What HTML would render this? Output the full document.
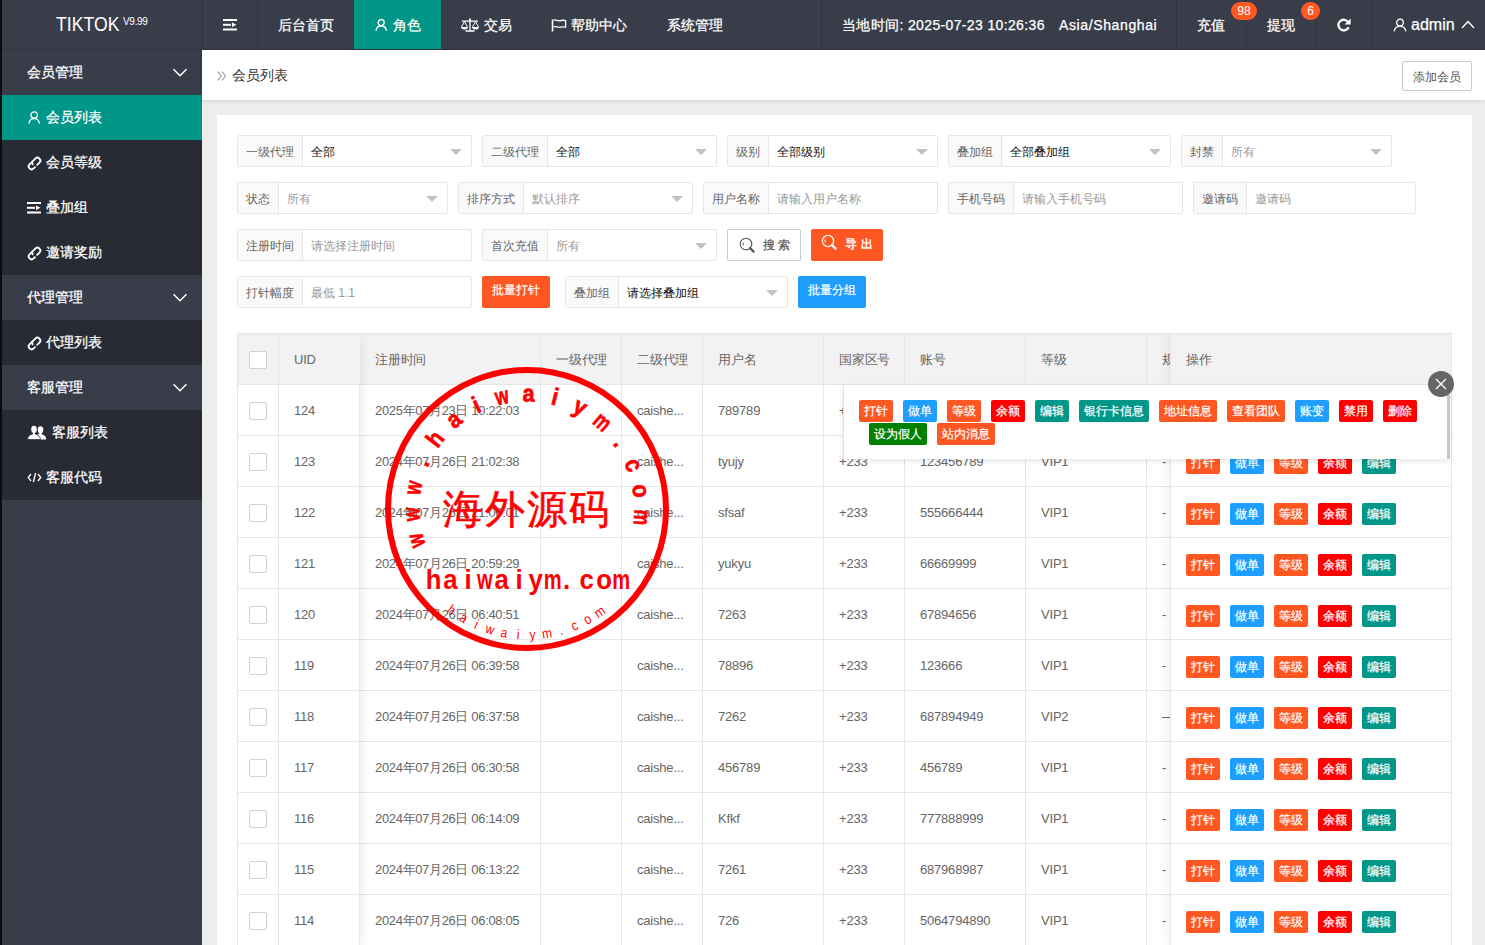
<!DOCTYPE html>
<html><head><meta charset="utf-8">
<style>
*{box-sizing:border-box;margin:0;padding:0}
html,body{width:1485px;height:945px;overflow:hidden}
body{position:relative;background:#ededed;font-family:"Liberation Sans",sans-serif;color:#666}
.a{position:absolute}
#hdr{left:0;top:0;width:1485px;height:50px;background:#393d49;border-bottom:1px solid #30333d}
.sep{position:absolute;top:0;width:1px;height:49px;background:#30333d}
.nv{position:absolute;top:0;height:49px;line-height:50px;color:#fff;font-size:14px;white-space:nowrap;-webkit-text-stroke:0.25px #fff}
#side{left:0;top:50px;width:202px;height:895px;background:#393d49}
#side .strip{position:absolute;left:0;top:0;width:2px;height:895px;background:#0b0c0e}
.si{position:absolute;left:2px;width:200px;height:45px;line-height:45px;color:#fff;font-size:14px;white-space:nowrap;-webkit-text-stroke:0.25px #fff}
.si.p{background:#393d49}
.si.c{background:#282b33}
.si.on{background:#009688}
#crumb{left:202px;top:50px;width:1283px;height:50px;background:#fff;box-shadow:0 1px 4px rgba(0,0,0,.12)}
#card{left:217px;top:115px;width:1255px;height:830px;background:#fff}

.fld{position:absolute;height:32px;border:1px solid #e6e6e6;border-radius:2px;background:#fff;font-size:12px;line-height:32px;white-space:nowrap}
.lab{position:absolute;left:0;top:0;height:30px;background:#fafafa;border-right:1px solid #e6e6e6;color:#666;text-align:center}
.val{position:absolute;top:0}
.tri{position:absolute;right:9px;top:13px;width:0;height:0;border-left:6px solid transparent;border-right:6px solid transparent;border-top:6px solid #c2c2c2}
.btn{position:absolute;height:32px;border-radius:2px;font-size:12px;line-height:32px;white-space:nowrap;-webkit-text-stroke:0.2px currentColor}
.wb{border:1px solid #c9c9c9;background:#fff;color:#555;line-height:30px}
#tbl{left:237px;top:333px;width:1215px;height:612px;border:1px solid #e6e6e6;border-bottom:0;overflow:hidden;background:#fff}
#tbl .vl{position:absolute;top:0;width:1px;height:612px;background:#e6e6e6}
#tbl .hl{position:absolute;left:0;width:1215px;height:1px;background:#e6e6e6}
.tc{position:absolute;height:51px;line-height:51px;font-size:13px;color:#666;white-space:nowrap;letter-spacing:-0.2px}
#fl{left:0;top:0;width:122px;height:612px;background:#fff;border-right:1px solid #e6e6e6;box-shadow:3px 0 8px rgba(0,0,0,.06)}
#fl .vl{height:612px}
.cb{position:absolute;left:11px;width:18px;height:18px;border:1px solid #d2d2d2;border-radius:2px;background:#fff}
#fr{left:932px;top:0;width:282px;height:612px;background:#fff;border-left:1px solid #e6e6e6;box-shadow:-3px 0 8px rgba(0,0,0,.06)}
.ob{position:absolute;height:22px;line-height:22px;padding:0 5px;border-radius:2px;color:#fff;font-size:12px;white-space:nowrap;-webkit-text-stroke:0.2px #fff}
#pop{left:843px;top:385px;width:607px;height:74px;background:#fff;border-left:1px solid #e2e2e2;box-shadow:0 2px 6px rgba(0,0,0,.1)}
</style></head><body>

<div id="hdr" class="a">
  <div class="nv" style="left:56px;top:-1px;font-size:19.5px;transform:scaleX(0.905);transform-origin:0 0;-webkit-text-stroke:0">TIKTOK</div>
  <div class="nv" style="left:123px;top:-3px;font-size:10px;letter-spacing:-0.3px;-webkit-text-stroke:0">V9.99</div>
  <div class="sep" style="left:202px"></div>
  <svg class="a" style="left:223px;top:19px" width="15" height="12" viewBox="0 0 15 12"><rect x="0" y="0" width="14" height="2" fill="#fff"/><rect x="0" y="4.8" width="8" height="2" fill="#fff"/><path d="M9 3.5 L13.5 5.8 L9 8.1Z" fill="#fff"/><rect x="0" y="9.5" width="14" height="2" fill="#fff"/></svg>
  <div class="sep" style="left:257px"></div>
  <div class="nv" style="left:278px">后台首页</div>
  <div class="a" style="left:354px;top:0;width:87px;height:49px;background:#009688"></div>
  <svg class="a" style="left:375px;top:19px" width="13" height="12" viewBox="0 0 13 12"><circle cx="6.2" cy="3.6" r="3" fill="none" stroke="#fff" stroke-width="1.3"/><path d="M1 11.8 C1.3 8.6 3.3 7 6.2 7 C9.1 7 11.1 8.6 11.4 11.8" fill="none" stroke="#fff" stroke-width="1.3"/></svg>
  <div class="nv" style="left:393px">角色</div>
  <svg class="a" style="left:460px;top:18px" width="20" height="14" viewBox="0 0 20 14"><path d="M2 3.2 H18 M10 1 V13 M5.5 13 H14.5" stroke="#fff" stroke-width="1.3" fill="none"/><circle cx="10" cy="1.6" r="1.1" fill="#fff"/><path d="M4.5 3.5 L1.5 9 M4.5 3.5 L7.5 9 M15.5 3.5 L12.5 9 M15.5 3.5 L18.5 9" stroke="#fff" stroke-width="1" fill="none"/><path d="M1 9 H8 C7.6 10.8 6.3 11.6 4.5 11.6 C2.7 11.6 1.4 10.8 1 9Z M12 9 H19 C18.6 10.8 17.3 11.6 15.5 11.6 C13.7 11.6 12.4 10.8 12 9Z" fill="#fff"/></svg>
  <div class="nv" style="left:484px">交易</div>
  <svg class="a" style="left:551px;top:19px" width="16" height="13" viewBox="0 0 16 13"><path d="M1.5 0.5 V12.5" stroke="#fff" stroke-width="1.6"/><path d="M2.5 1.2 C5 0.2 7 2.4 9.5 1.6 C11.5 1 13 1.2 14.6 1.6 V8.2 C13 7.8 11.5 7.6 9.5 8.2 C7 9 5 6.8 2.5 7.8" fill="none" stroke="#fff" stroke-width="1.3"/></svg>
  <div class="nv" style="left:571px">帮助中心</div>
  <div class="nv" style="left:667px">系统管理</div>
  <div class="sep" style="left:821px"></div>
  <div class="nv" style="left:842px;letter-spacing:0.36px">当地时间: 2025-07-23 10:26:36</div>
  <div class="nv" style="left:1059px;letter-spacing:0.62px">Asia/Shanghai</div>
  <div class="sep" style="left:1176px"></div>
  <div class="nv" style="left:1197px">充值</div>
  <div class="a" style="left:1231px;top:2px;width:26px;height:18px;border-radius:9px;background:#ff5722;color:#fff;font-size:12px;line-height:18px;text-align:center;z-index:2">98</div>
  <div class="sep" style="left:1246px"></div>
  <div class="nv" style="left:1267px">提现</div>
  <div class="a" style="left:1301px;top:2px;width:19px;height:18px;border-radius:9px;background:#ff5722;color:#fff;font-size:12px;line-height:18px;text-align:center;z-index:2">6</div>
  <div class="sep" style="left:1316px"></div>
  <svg class="a" style="left:1336px;top:18px" width="16" height="14" viewBox="0 0 16 14"><path d="M12.2 4.2 A5.3 5.3 0 1 0 12.6 9.2" fill="none" stroke="#fff" stroke-width="2.3"/><path d="M14.6 0.6 V6.6 H8.6Z" fill="#fff"/></svg>
  <div class="sep" style="left:1372px"></div>
  <svg class="a" style="left:1393px;top:18px" width="14" height="14" viewBox="0 0 14 14"><circle cx="7" cy="4.5" r="3.3" fill="none" stroke="#fff" stroke-width="1.3"/><path d="M1.2 13.4 C1.5 10 3.6 8.4 7 8.4 C10.4 8.4 12.5 10 12.8 13.4" fill="none" stroke="#fff" stroke-width="1.3"/></svg>
  <div class="nv" style="left:1411px;font-size:16px">admin</div>
  <svg class="a" style="left:1461px;top:20px" width="14" height="9" viewBox="0 0 14 9"><path d="M1 8 L7 1.6 L13 8" fill="none" stroke="#fff" stroke-width="1.4"/></svg>
</div>

<div id="side" class="a">
  <div class="si p" style="top:0"><span class="a" style="left:25px">会员管理</span><svg class="a" style="left:170px;top:18px" width="16" height="10" viewBox="0 0 16 10"><path d="M1.5 1.2 L8 7.8 L14.5 1.2" fill="none" stroke="#fff" stroke-width="1.5"/></svg></div>
  <div class="si on" style="top:45px"><svg class="a" style="left:26px;top:16px" width="13" height="13" viewBox="0 0 13 13"><circle cx="6.2" cy="4" r="3.2" fill="none" stroke="#fff" stroke-width="1.3"/><path d="M1 12.6 C1.3 9.2 3.3 7.6 6.2 7.6 C9.1 7.6 11.1 9.2 11.4 12.6" fill="none" stroke="#fff" stroke-width="1.3"/></svg><span class="a" style="left:44px">会员列表</span></div>
  <div class="si c" style="top:90px"><svg class="a link" style="left:24px;top:15px" width="17" height="17" viewBox="0 0 17 17"><g transform="rotate(-45 8.5 8.5)" fill="none" stroke="#fff" stroke-width="1.8"><path d="M8.6 5.6 H4.4 A2.9 2.9 0 0 0 4.4 11.4 H7"/><path d="M6.6 8.5 C6.6 7 7.4 5.6 9 5.6 H12.6 A2.9 2.9 0 0 1 12.6 11.4 H8.6"/></g></svg><span class="a" style="left:44px">会员等级</span></div>
  <div class="si c" style="top:135px"><svg class="a" style="left:25px;top:17px" width="15" height="12" viewBox="0 0 15 12"><rect x="0" y="0" width="14" height="2" fill="#fff"/><rect x="0" y="4.8" width="8" height="2" fill="#fff"/><path d="M9 3.5 L13.5 5.8 L9 8.1Z" fill="#fff"/><rect x="0" y="9.5" width="14" height="2" fill="#fff"/></svg><span class="a" style="left:44px">叠加组</span></div>
  <div class="si c" style="top:180px"><svg class="a link" style="left:24px;top:15px" width="17" height="17" viewBox="0 0 17 17"><g transform="rotate(-45 8.5 8.5)" fill="none" stroke="#fff" stroke-width="1.8"><path d="M8.6 5.6 H4.4 A2.9 2.9 0 0 0 4.4 11.4 H7"/><path d="M6.6 8.5 C6.6 7 7.4 5.6 9 5.6 H12.6 A2.9 2.9 0 0 1 12.6 11.4 H8.6"/></g></svg><span class="a" style="left:44px">邀请奖励</span></div>
  <div class="si p" style="top:225px"><span class="a" style="left:25px">代理管理</span><svg class="a" style="left:170px;top:18px" width="16" height="10" viewBox="0 0 16 10"><path d="M1.5 1.2 L8 7.8 L14.5 1.2" fill="none" stroke="#fff" stroke-width="1.5"/></svg></div>
  <div class="si c" style="top:270px"><svg class="a link" style="left:24px;top:15px" width="17" height="17" viewBox="0 0 17 17"><g transform="rotate(-45 8.5 8.5)" fill="none" stroke="#fff" stroke-width="1.8"><path d="M8.6 5.6 H4.4 A2.9 2.9 0 0 0 4.4 11.4 H7"/><path d="M6.6 8.5 C6.6 7 7.4 5.6 9 5.6 H12.6 A2.9 2.9 0 0 1 12.6 11.4 H8.6"/></g></svg><span class="a" style="left:44px">代理列表</span></div>
  <div class="si p" style="top:315px"><span class="a" style="left:25px">客服管理</span><svg class="a" style="left:170px;top:18px" width="16" height="10" viewBox="0 0 16 10"><path d="M1.5 1.2 L8 7.8 L14.5 1.2" fill="none" stroke="#fff" stroke-width="1.5"/></svg></div>
  <div class="si c" style="top:360px"><svg class="a" style="left:25px;top:15px" width="20" height="15" viewBox="0 0 20 15"><path d="M13.5 1.2 C15.4 1.2 16.4 2.6 16.4 4.6 C16.4 6.4 15.6 7.8 14.6 8.4 L14.6 9.2 C17.4 10 19.2 11.2 19.2 14.6 H12.6 C12.4 12 11.4 10.6 9.8 9.8 C11 9.4 12.3 9 12.4 8.4 C11.4 7.8 10.6 6.4 10.6 4.6 C10.6 2.6 11.6 1.2 13.5 1.2Z" fill="#fff"/><path d="M7 0.4 C9 0.4 10.2 2 10.2 4.2 C10.2 6.2 9.3 7.6 8.2 8.2 V9 C11.2 9.9 13.4 11.2 13.4 14.6 H0.6 C0.6 11.2 2.8 9.9 5.8 9 V8.2 C4.7 7.6 3.8 6.2 3.8 4.2 C3.8 2 5 0.4 7 0.4Z" fill="#fff" stroke="#282b33" stroke-width="0.8"/></svg><span class="a" style="left:50px">客服列表</span></div>
  <div class="si c" style="top:405px"><svg class="a" style="left:24px;top:17px" width="18" height="11" viewBox="0 0 18 11"><path d="M5 2 L2.2 5.5 L5 9 M12 2 L14.8 5.5 L12 9 M9.6 1 L7.4 10" fill="none" stroke="#fff" stroke-width="1.3"/></svg><span class="a" style="left:44px">客服代码</span></div>
  <div class="strip"></div>
</div>
<div class="a" style="left:0;top:0;width:2px;height:50px;background:#0b0c0e"></div>

<div id="crumb" class="a">
  <svg class="a" style="left:15px;top:21px" width="10" height="10" viewBox="0 0 10 10"><path d="M0.8 0.6 L4.4 5 L0.8 9.4 M5 0.6 L8.6 5 L5 9.4" fill="none" stroke="#999" stroke-width="1.1"/></svg>
  <span class="a" style="left:30px;top:0;line-height:50px;font-size:14px;color:#333">会员列表</span>
  <div class="a" style="left:1200px;top:11px;width:70px;height:30px;border:1px solid #c9c9c9;border-radius:2px;font-size:12px;line-height:30px;text-align:center;color:#555">添加会员</div>
</div>

<div id="card" class="a"></div>
<div class="fld" style="left:237px;top:135px;width:235px"><div class="lab" style="width:65px">一级代理</div><div class="val" style="left:73px;color:#111">全部</div><i class="tri"></i></div>
<div class="fld" style="left:482px;top:135px;width:235px"><div class="lab" style="width:65px">二级代理</div><div class="val" style="left:73px;color:#111">全部</div><i class="tri"></i></div>
<div class="fld" style="left:727px;top:135px;width:211px"><div class="lab" style="width:41px">级别</div><div class="val" style="left:49px;color:#111">全部级别</div><i class="tri"></i></div>
<div class="fld" style="left:948px;top:135px;width:223px"><div class="lab" style="width:53px">叠加组</div><div class="val" style="left:61px;color:#111">全部叠加组</div><i class="tri"></i></div>
<div class="fld" style="left:1181px;top:135px;width:211px"><div class="lab" style="width:41px">封禁</div><div class="val" style="left:49px;color:#999">所有</div><i class="tri"></i></div>
<div class="fld" style="left:237px;top:182px;width:211px"><div class="lab" style="width:41px">状态</div><div class="val" style="left:49px;color:#999">所有</div><i class="tri"></i></div>
<div class="fld" style="left:458px;top:182px;width:235px"><div class="lab" style="width:65px">排序方式</div><div class="val" style="left:73px;color:#999">默认排序</div><i class="tri"></i></div>
<div class="fld" style="left:703px;top:182px;width:235px"><div class="lab" style="width:65px">用户名称</div><div class="val" style="left:73px;color:#999">请输入用户名称</div></div>
<div class="fld" style="left:948px;top:182px;width:235px"><div class="lab" style="width:65px">手机号码</div><div class="val" style="left:73px;color:#999">请输入手机号码</div></div>
<div class="fld" style="left:1193px;top:182px;width:223px"><div class="lab" style="width:53px">邀请码</div><div class="val" style="left:61px;color:#999">邀请码</div></div>
<div class="fld" style="left:237px;top:229px;width:235px"><div class="lab" style="width:65px">注册时间</div><div class="val" style="left:73px;color:#999">请选择注册时间</div></div>
<div class="fld" style="left:482px;top:229px;width:235px"><div class="lab" style="width:65px">首次充值</div><div class="val" style="left:73px;color:#999">所有</div><i class="tri"></i></div>
<div class="btn wb" style="left:727px;top:229px;width:74px"><svg class="a" style="left:11px;top:7px" width="17" height="17" viewBox="0 0 17 17"><circle cx="7" cy="7" r="5.8" fill="none" stroke="#555" stroke-width="1.1"/><path d="M11 11 L14.6 14.6" stroke="#555" stroke-width="2.2" stroke-linecap="round"/><path d="M4.2 5.6 C3.9 6.6 4 7.6 4.4 8.4" fill="none" stroke="#555" stroke-width="1"/></svg><span class="a" style="left:35px;top:0px;letter-spacing:3px">搜索</span></div>
<div class="btn" style="left:811px;top:229px;width:72px;background:#ff5722;color:#fff"><svg class="a" style="left:10px;top:5px" width="17" height="17" viewBox="0 0 17 17"><circle cx="7" cy="7" r="5.6" fill="none" stroke="#fff" stroke-width="1.3"/><path d="M11 11 L14.6 14.6" stroke="#fff" stroke-width="2.2" stroke-linecap="round"/><path d="M4.2 5.6 C3.9 6.6 4 7.6 4.4 8.4" fill="none" stroke="#fff" stroke-width="1"/></svg><span class="a" style="left:34px;top:-1px;letter-spacing:4px;-webkit-text-stroke:0.4px #fff">导出</span></div>
<div class="fld" style="left:237px;top:276px;width:235px"><div class="lab" style="width:65px">打针幅度</div><div class="val" style="left:73px;color:#999">最低 1.1</div></div>
<div class="btn" style="left:482px;top:276px;width:68px;background:#ff5722;color:#fff;line-height:29px;text-align:center">批量打针</div>
<div class="fld" style="left:565px;top:276px;width:223px"><div class="lab" style="width:53px">叠加组</div><div class="val" style="left:61px;color:#111">请选择叠加组</div><i class="tri"></i></div>
<div class="btn" style="left:798px;top:276px;width:68px;background:#1e9fff;color:#fff;line-height:29px;text-align:center">批量分组</div>
<div id="tbl" class="a">
<div class="a" style="left:0;top:0;width:1215px;height:50px;background:#f2f2f2"></div>
<div class="vl" style="left:40px"></div>
<div class="vl" style="left:121px"></div>
<div class="vl" style="left:302px"></div>
<div class="vl" style="left:383px"></div>
<div class="vl" style="left:464px"></div>
<div class="vl" style="left:585px"></div>
<div class="vl" style="left:666px"></div>
<div class="vl" style="left:787px"></div>
<div class="vl" style="left:908px"></div>
<div class="hl" style="top:50px"></div>
<div class="hl" style="top:101px"></div>
<div class="hl" style="top:152px"></div>
<div class="hl" style="top:203px"></div>
<div class="hl" style="top:254px"></div>
<div class="hl" style="top:305px"></div>
<div class="hl" style="top:356px"></div>
<div class="hl" style="top:407px"></div>
<div class="hl" style="top:458px"></div>
<div class="hl" style="top:509px"></div>
<div class="hl" style="top:560px"></div>
<div class="hl" style="top:611px"></div>
<div class="tc" style="left:318px;top:0">一级代理</div>
<div class="tc" style="left:399px;top:0">二级代理</div>
<div class="tc" style="left:480px;top:0">用户名</div>
<div class="tc" style="left:601px;top:0">国家区号</div>
<div class="tc" style="left:682px;top:0">账号</div>
<div class="tc" style="left:803px;top:0">等级</div>
<div class="tc" style="left:924px;top:0">规则</div>
<div class="tc" style="left:137px;top:0">注册时间</div>
<div class="tc" style="left:137px;top:51px;letter-spacing:-0.34px">2025年07月23日 10:22:03</div>
<div class="tc" style="left:399px;top:51px">caishe...</div>
<div class="tc" style="left:480px;top:51px">789789</div>
<div class="tc" style="left:601px;top:51px">+233</div>
<div class="tc" style="left:924px;top:51px">-</div>
<div class="tc" style="left:137px;top:102px;letter-spacing:-0.34px">2024年07月26日 21:02:38</div>
<div class="tc" style="left:399px;top:102px">caishe...</div>
<div class="tc" style="left:480px;top:102px">tyujy</div>
<div class="tc" style="left:601px;top:102px">+233</div>
<div class="tc" style="left:682px;top:102px">123456789</div>
<div class="tc" style="left:803px;top:102px">VIP1</div>
<div class="tc" style="left:924px;top:102px">-</div>
<div class="tc" style="left:137px;top:153px;letter-spacing:-0.34px">2024年07月26日 21:00:01</div>
<div class="tc" style="left:399px;top:153px">caishe...</div>
<div class="tc" style="left:480px;top:153px">sfsaf</div>
<div class="tc" style="left:601px;top:153px">+233</div>
<div class="tc" style="left:682px;top:153px">555666444</div>
<div class="tc" style="left:803px;top:153px">VIP1</div>
<div class="tc" style="left:924px;top:153px">-</div>
<div class="tc" style="left:137px;top:204px;letter-spacing:-0.34px">2024年07月26日 20:59:29</div>
<div class="tc" style="left:399px;top:204px">caishe...</div>
<div class="tc" style="left:480px;top:204px">yukyu</div>
<div class="tc" style="left:601px;top:204px">+233</div>
<div class="tc" style="left:682px;top:204px">66669999</div>
<div class="tc" style="left:803px;top:204px">VIP1</div>
<div class="tc" style="left:924px;top:204px">-</div>
<div class="tc" style="left:137px;top:255px;letter-spacing:-0.34px">2024年07月26日 06:40:51</div>
<div class="tc" style="left:399px;top:255px">caishe...</div>
<div class="tc" style="left:480px;top:255px">7263</div>
<div class="tc" style="left:601px;top:255px">+233</div>
<div class="tc" style="left:682px;top:255px">67894656</div>
<div class="tc" style="left:803px;top:255px">VIP1</div>
<div class="tc" style="left:924px;top:255px">-</div>
<div class="tc" style="left:137px;top:306px;letter-spacing:-0.34px">2024年07月26日 06:39:58</div>
<div class="tc" style="left:399px;top:306px">caishe...</div>
<div class="tc" style="left:480px;top:306px">78896</div>
<div class="tc" style="left:601px;top:306px">+233</div>
<div class="tc" style="left:682px;top:306px">123666</div>
<div class="tc" style="left:803px;top:306px">VIP1</div>
<div class="tc" style="left:924px;top:306px">-</div>
<div class="tc" style="left:137px;top:357px;letter-spacing:-0.34px">2024年07月26日 06:37:58</div>
<div class="tc" style="left:399px;top:357px">caishe...</div>
<div class="tc" style="left:480px;top:357px">7262</div>
<div class="tc" style="left:601px;top:357px">+233</div>
<div class="tc" style="left:682px;top:357px">687894949</div>
<div class="tc" style="left:803px;top:357px">VIP2</div>
<div class="tc" style="left:924px;top:357px">—</div>
<div class="tc" style="left:137px;top:408px;letter-spacing:-0.34px">2024年07月26日 06:30:58</div>
<div class="tc" style="left:399px;top:408px">caishe...</div>
<div class="tc" style="left:480px;top:408px">456789</div>
<div class="tc" style="left:601px;top:408px">+233</div>
<div class="tc" style="left:682px;top:408px">456789</div>
<div class="tc" style="left:803px;top:408px">VIP1</div>
<div class="tc" style="left:924px;top:408px">-</div>
<div class="tc" style="left:137px;top:459px;letter-spacing:-0.34px">2024年07月26日 06:14:09</div>
<div class="tc" style="left:399px;top:459px">caishe...</div>
<div class="tc" style="left:480px;top:459px">Kfkf</div>
<div class="tc" style="left:601px;top:459px">+233</div>
<div class="tc" style="left:682px;top:459px">777888999</div>
<div class="tc" style="left:803px;top:459px">VIP1</div>
<div class="tc" style="left:924px;top:459px">-</div>
<div class="tc" style="left:137px;top:510px;letter-spacing:-0.34px">2024年07月26日 06:13:22</div>
<div class="tc" style="left:399px;top:510px">caishe...</div>
<div class="tc" style="left:480px;top:510px">7261</div>
<div class="tc" style="left:601px;top:510px">+233</div>
<div class="tc" style="left:682px;top:510px">687968987</div>
<div class="tc" style="left:803px;top:510px">VIP1</div>
<div class="tc" style="left:924px;top:510px">-</div>
<div class="tc" style="left:137px;top:561px;letter-spacing:-0.34px">2024年07月26日 06:08:05</div>
<div class="tc" style="left:399px;top:561px">caishe...</div>
<div class="tc" style="left:480px;top:561px">726</div>
<div class="tc" style="left:601px;top:561px">+233</div>
<div class="tc" style="left:682px;top:561px">5064794890</div>
<div class="tc" style="left:803px;top:561px">VIP1</div>
<div class="tc" style="left:924px;top:561px">-</div>
<div id="fl" class="a">
<div class="a" style="left:0;top:0;width:122px;height:50px;background:#f2f2f2"></div>
<div class="vl" style="left:40px"></div>
<div class="hl" style="top:50px;width:122px"></div>
<div class="hl" style="top:101px;width:122px"></div>
<div class="hl" style="top:152px;width:122px"></div>
<div class="hl" style="top:203px;width:122px"></div>
<div class="hl" style="top:254px;width:122px"></div>
<div class="hl" style="top:305px;width:122px"></div>
<div class="hl" style="top:356px;width:122px"></div>
<div class="hl" style="top:407px;width:122px"></div>
<div class="hl" style="top:458px;width:122px"></div>
<div class="hl" style="top:509px;width:122px"></div>
<div class="hl" style="top:560px;width:122px"></div>
<div class="hl" style="top:611px;width:122px"></div>
<i class="cb" style="top:17px"></i><div class="tc" style="left:56px;top:0">UID</div>
<i class="cb" style="top:68px"></i><div class="tc" style="left:56px;top:51px">124</div>
<i class="cb" style="top:119px"></i><div class="tc" style="left:56px;top:102px">123</div>
<i class="cb" style="top:170px"></i><div class="tc" style="left:56px;top:153px">122</div>
<i class="cb" style="top:221px"></i><div class="tc" style="left:56px;top:204px">121</div>
<i class="cb" style="top:272px"></i><div class="tc" style="left:56px;top:255px">120</div>
<i class="cb" style="top:323px"></i><div class="tc" style="left:56px;top:306px">119</div>
<i class="cb" style="top:374px"></i><div class="tc" style="left:56px;top:357px">118</div>
<i class="cb" style="top:425px"></i><div class="tc" style="left:56px;top:408px">117</div>
<i class="cb" style="top:476px"></i><div class="tc" style="left:56px;top:459px">116</div>
<i class="cb" style="top:527px"></i><div class="tc" style="left:56px;top:510px">115</div>
<i class="cb" style="top:578px"></i><div class="tc" style="left:56px;top:561px">114</div>
</div>
<div id="fr" class="a">
<div class="a" style="left:0;top:0;width:282px;height:50px;background:#f2f2f2"></div>
<div class="hl" style="top:50px;width:282px"></div>
<div class="hl" style="top:101px;width:282px"></div>
<div class="hl" style="top:152px;width:282px"></div>
<div class="hl" style="top:203px;width:282px"></div>
<div class="hl" style="top:254px;width:282px"></div>
<div class="hl" style="top:305px;width:282px"></div>
<div class="hl" style="top:356px;width:282px"></div>
<div class="hl" style="top:407px;width:282px"></div>
<div class="hl" style="top:458px;width:282px"></div>
<div class="hl" style="top:509px;width:282px"></div>
<div class="hl" style="top:560px;width:282px"></div>
<div class="hl" style="top:611px;width:282px"></div>
<div class="tc" style="left:15px;top:0">操作</div>
<div class="ob" style="top:67px;left:15px;background:#ff5722">打针</div><div class="ob" style="top:67px;left:59px;background:#1e9fff">做单</div><div class="ob" style="top:67px;left:103px;background:#ff5722">等级</div><div class="ob" style="top:67px;left:147px;background:#f00">余额</div><div class="ob" style="top:67px;left:191px;background:#009688">编辑</div>
<div class="ob" style="top:118px;left:15px;background:#ff5722">打针</div><div class="ob" style="top:118px;left:59px;background:#1e9fff">做单</div><div class="ob" style="top:118px;left:103px;background:#ff5722">等级</div><div class="ob" style="top:118px;left:147px;background:#f00">余额</div><div class="ob" style="top:118px;left:191px;background:#009688">编辑</div>
<div class="ob" style="top:169px;left:15px;background:#ff5722">打针</div><div class="ob" style="top:169px;left:59px;background:#1e9fff">做单</div><div class="ob" style="top:169px;left:103px;background:#ff5722">等级</div><div class="ob" style="top:169px;left:147px;background:#f00">余额</div><div class="ob" style="top:169px;left:191px;background:#009688">编辑</div>
<div class="ob" style="top:220px;left:15px;background:#ff5722">打针</div><div class="ob" style="top:220px;left:59px;background:#1e9fff">做单</div><div class="ob" style="top:220px;left:103px;background:#ff5722">等级</div><div class="ob" style="top:220px;left:147px;background:#f00">余额</div><div class="ob" style="top:220px;left:191px;background:#009688">编辑</div>
<div class="ob" style="top:271px;left:15px;background:#ff5722">打针</div><div class="ob" style="top:271px;left:59px;background:#1e9fff">做单</div><div class="ob" style="top:271px;left:103px;background:#ff5722">等级</div><div class="ob" style="top:271px;left:147px;background:#f00">余额</div><div class="ob" style="top:271px;left:191px;background:#009688">编辑</div>
<div class="ob" style="top:322px;left:15px;background:#ff5722">打针</div><div class="ob" style="top:322px;left:59px;background:#1e9fff">做单</div><div class="ob" style="top:322px;left:103px;background:#ff5722">等级</div><div class="ob" style="top:322px;left:147px;background:#f00">余额</div><div class="ob" style="top:322px;left:191px;background:#009688">编辑</div>
<div class="ob" style="top:373px;left:15px;background:#ff5722">打针</div><div class="ob" style="top:373px;left:59px;background:#1e9fff">做单</div><div class="ob" style="top:373px;left:103px;background:#ff5722">等级</div><div class="ob" style="top:373px;left:147px;background:#f00">余额</div><div class="ob" style="top:373px;left:191px;background:#009688">编辑</div>
<div class="ob" style="top:424px;left:15px;background:#ff5722">打针</div><div class="ob" style="top:424px;left:59px;background:#1e9fff">做单</div><div class="ob" style="top:424px;left:103px;background:#ff5722">等级</div><div class="ob" style="top:424px;left:147px;background:#f00">余额</div><div class="ob" style="top:424px;left:191px;background:#009688">编辑</div>
<div class="ob" style="top:475px;left:15px;background:#ff5722">打针</div><div class="ob" style="top:475px;left:59px;background:#1e9fff">做单</div><div class="ob" style="top:475px;left:103px;background:#ff5722">等级</div><div class="ob" style="top:475px;left:147px;background:#f00">余额</div><div class="ob" style="top:475px;left:191px;background:#009688">编辑</div>
<div class="ob" style="top:526px;left:15px;background:#ff5722">打针</div><div class="ob" style="top:526px;left:59px;background:#1e9fff">做单</div><div class="ob" style="top:526px;left:103px;background:#ff5722">等级</div><div class="ob" style="top:526px;left:147px;background:#f00">余额</div><div class="ob" style="top:526px;left:191px;background:#009688">编辑</div>
<div class="ob" style="top:577px;left:15px;background:#ff5722">打针</div><div class="ob" style="top:577px;left:59px;background:#1e9fff">做单</div><div class="ob" style="top:577px;left:103px;background:#ff5722">等级</div><div class="ob" style="top:577px;left:147px;background:#f00">余额</div><div class="ob" style="top:577px;left:191px;background:#009688">编辑</div>
</div>
</div>
<div id="pop" class="a">
<div class="ob" style="left:15px;top:15px;width:34px;background:#ff5722">打针</div>
<div class="ob" style="left:59px;top:15px;width:34px;background:#1e9fff">做单</div>
<div class="ob" style="left:103px;top:15px;width:34px;background:#ff5722">等级</div>
<div class="ob" style="left:147px;top:15px;width:34px;background:#f00">余额</div>
<div class="ob" style="left:191px;top:15px;width:34px;background:#009688">编辑</div>
<div class="ob" style="left:235px;top:15px;width:70px;background:#009688">银行卡信息</div>
<div class="ob" style="left:315px;top:15px;width:58px;background:#ff5722">地址信息</div>
<div class="ob" style="left:383px;top:15px;width:58px;background:#ff5722">查看团队</div>
<div class="ob" style="left:451px;top:15px;width:34px;background:#1e9fff">账变</div>
<div class="ob" style="left:495px;top:15px;width:34px;background:#f00">禁用</div>
<div class="ob" style="left:539px;top:15px;width:34px;background:#f00">删除</div>
<div class="ob" style="left:25px;top:38px;width:58px;background:#008000">设为假人</div>
<div class="ob" style="left:93px;top:38px;width:58px;background:#ff5722">站内消息</div>
<div class="a" style="left:603px;top:10px;width:3px;height:64px;background:#c8c8c8"></div>
</div>
<div class="a" style="left:1428px;top:371px;width:26px;height:26px;border-radius:13px;background:#666"><svg class="a" style="left:7px;top:7px" width="12" height="12" viewBox="0 0 12 12"><path d="M1 1 L11 11 M11 1 L1 11" stroke="#fff" stroke-width="1.3"/></svg></div>
<!--STAMP--><svg class="a" style="left:0;top:0;z-index:5;pointer-events:none" width="1485" height="945" viewBox="0 0 1485 945">
<circle cx="527" cy="509" r="139" fill="none" stroke="#f00" stroke-width="6"/>
<g transform="translate(423.66 538.63) rotate(254.00) scale(0.72 1)"><text x="0" y="0" text-anchor="middle" font-family="Liberation Sans" font-weight="bold" font-size="24" fill="#f00" stroke="#f00" stroke-width="0.7">w</text></g>
<g transform="translate(419.61 513.97) rotate(267.35) scale(0.72 1)"><text x="0" y="0" text-anchor="middle" font-family="Liberation Sans" font-weight="bold" font-size="24" fill="#f00" stroke="#f00" stroke-width="0.7">w</text></g>
<g transform="translate(421.37 489.04) rotate(280.70) scale(0.72 1)"><text x="0" y="0" text-anchor="middle" font-family="Liberation Sans" font-weight="bold" font-size="24" fill="#f00" stroke="#f00" stroke-width="0.7">w</text></g>
<g transform="translate(428.83 465.19) rotate(294.05) scale(0.9 1)"><text x="0" y="0" text-anchor="middle" font-family="Liberation Sans" font-weight="bold" font-size="24" fill="#f00" stroke="#f00" stroke-width="0.7">.</text></g>
<g transform="translate(441.60 443.71) rotate(307.40) scale(0.9 1)"><text x="0" y="0" text-anchor="middle" font-family="Liberation Sans" font-weight="bold" font-size="24" fill="#f00" stroke="#f00" stroke-width="0.7">h</text></g>
<g transform="translate(458.98 425.75) rotate(320.75) scale(0.9 1)"><text x="0" y="0" text-anchor="middle" font-family="Liberation Sans" font-weight="bold" font-size="24" fill="#f00" stroke="#f00" stroke-width="0.7">a</text></g>
<g transform="translate(480.04 412.30) rotate(334.10) scale(0.9 1)"><text x="0" y="0" text-anchor="middle" font-family="Liberation Sans" font-weight="bold" font-size="24" fill="#f00" stroke="#f00" stroke-width="0.7">i</text></g>
<g transform="translate(503.64 404.07) rotate(347.45) scale(0.72 1)"><text x="0" y="0" text-anchor="middle" font-family="Liberation Sans" font-weight="bold" font-size="24" fill="#f00" stroke="#f00" stroke-width="0.7">w</text></g>
<g transform="translate(528.50 401.51) rotate(360.80) scale(0.9 1)"><text x="0" y="0" text-anchor="middle" font-family="Liberation Sans" font-weight="bold" font-size="24" fill="#f00" stroke="#f00" stroke-width="0.7">a</text></g>
<g transform="translate(553.28 404.76) rotate(374.15) scale(0.9 1)"><text x="0" y="0" text-anchor="middle" font-family="Liberation Sans" font-weight="bold" font-size="24" fill="#f00" stroke="#f00" stroke-width="0.7">i</text></g>
<g transform="translate(576.64 413.65) rotate(387.50) scale(0.9 1)"><text x="0" y="0" text-anchor="middle" font-family="Liberation Sans" font-weight="bold" font-size="24" fill="#f00" stroke="#f00" stroke-width="0.7">y</text></g>
<g transform="translate(597.31 427.68) rotate(400.85) scale(0.72 1)"><text x="0" y="0" text-anchor="middle" font-family="Liberation Sans" font-weight="bold" font-size="24" fill="#f00" stroke="#f00" stroke-width="0.7">m</text></g>
<g transform="translate(614.19 446.12) rotate(414.20) scale(0.9 1)"><text x="0" y="0" text-anchor="middle" font-family="Liberation Sans" font-weight="bold" font-size="24" fill="#f00" stroke="#f00" stroke-width="0.7">.</text></g>
<g transform="translate(626.35 467.95) rotate(427.55) scale(0.9 1)"><text x="0" y="0" text-anchor="middle" font-family="Liberation Sans" font-weight="bold" font-size="24" fill="#f00" stroke="#f00" stroke-width="0.7">c</text></g>
<g transform="translate(633.15 492.00) rotate(440.90) scale(0.9 1)"><text x="0" y="0" text-anchor="middle" font-family="Liberation Sans" font-weight="bold" font-size="24" fill="#f00" stroke="#f00" stroke-width="0.7">o</text></g>
<g transform="translate(634.20 516.97) rotate(454.25) scale(0.72 1)"><text x="0" y="0" text-anchor="middle" font-family="Liberation Sans" font-weight="bold" font-size="24" fill="#f00" stroke="#f00" stroke-width="0.7">m</text></g>
<g transform="translate(449.01 613.63) rotate(36.70) scale(0.85 1)"><text x="0" y="0" text-anchor="middle" font-family="Liberation Sans" font-size="14" fill="#f00">h</text></g>
<g transform="translate(461.43 621.83) rotate(30.16) scale(0.85 1)"><text x="0" y="0" text-anchor="middle" font-family="Liberation Sans" font-size="14" fill="#f00">a</text></g>
<g transform="translate(474.71 628.57) rotate(23.62) scale(0.85 1)"><text x="0" y="0" text-anchor="middle" font-family="Liberation Sans" font-size="14" fill="#f00">i</text></g>
<g transform="translate(488.67 633.74) rotate(17.08) scale(0.85 1)"><text x="0" y="0" text-anchor="middle" font-family="Liberation Sans" font-size="14" fill="#f00">w</text></g>
<g transform="translate(503.13 637.30) rotate(10.54) scale(0.85 1)"><text x="0" y="0" text-anchor="middle" font-family="Liberation Sans" font-size="14" fill="#f00">a</text></g>
<g transform="translate(517.90 639.18) rotate(4.00) scale(0.85 1)"><text x="0" y="0" text-anchor="middle" font-family="Liberation Sans" font-size="14" fill="#f00">i</text></g>
<g transform="translate(532.78 639.37) rotate(-2.54) scale(0.85 1)"><text x="0" y="0" text-anchor="middle" font-family="Liberation Sans" font-size="14" fill="#f00">y</text></g>
<g transform="translate(547.59 637.86) rotate(-9.08) scale(0.85 1)"><text x="0" y="0" text-anchor="middle" font-family="Liberation Sans" font-size="14" fill="#f00">m</text></g>
<g transform="translate(562.14 634.68) rotate(-15.62) scale(0.85 1)"><text x="0" y="0" text-anchor="middle" font-family="Liberation Sans" font-size="14" fill="#f00">.</text></g>
<g transform="translate(576.22 629.86) rotate(-22.16) scale(0.85 1)"><text x="0" y="0" text-anchor="middle" font-family="Liberation Sans" font-size="14" fill="#f00">c</text></g>
<g transform="translate(589.67 623.47) rotate(-28.70) scale(0.85 1)"><text x="0" y="0" text-anchor="middle" font-family="Liberation Sans" font-size="14" fill="#f00">o</text></g>
<g transform="translate(602.30 615.58) rotate(-35.24) scale(0.85 1)"><text x="0" y="0" text-anchor="middle" font-family="Liberation Sans" font-size="14" fill="#f00">m</text></g>
<text x="527" y="523" text-anchor="middle" font-family="Liberation Serif" font-size="40" fill="#f00" stroke="#f00" stroke-width="0.6" letter-spacing="2">海外源码</text>
<g transform="translate(433.7 589.3) scale(0.92 1)"><text x="0" y="0" text-anchor="middle" font-family="Liberation Sans" font-weight="bold" font-size="28" fill="#f00">h</text></g>
<g transform="translate(450.5 589.3) scale(0.92 1)"><text x="0" y="0" text-anchor="middle" font-family="Liberation Sans" font-weight="bold" font-size="28" fill="#f00">a</text></g>
<g transform="translate(468 589.3) scale(0.92 1)"><text x="0" y="0" text-anchor="middle" font-family="Liberation Sans" font-weight="bold" font-size="28" fill="#f00">i</text></g>
<g transform="translate(484.8 589.3) scale(0.72 1)"><text x="0" y="0" text-anchor="middle" font-family="Liberation Sans" font-weight="bold" font-size="28" fill="#f00">w</text></g>
<g transform="translate(501.6 589.3) scale(0.92 1)"><text x="0" y="0" text-anchor="middle" font-family="Liberation Sans" font-weight="bold" font-size="28" fill="#f00">a</text></g>
<g transform="translate(519 589.3) scale(0.92 1)"><text x="0" y="0" text-anchor="middle" font-family="Liberation Sans" font-weight="bold" font-size="28" fill="#f00">i</text></g>
<g transform="translate(535.7 589.3) scale(0.92 1)"><text x="0" y="0" text-anchor="middle" font-family="Liberation Sans" font-weight="bold" font-size="28" fill="#f00">y</text></g>
<g transform="translate(552.8 589.3) scale(0.72 1)"><text x="0" y="0" text-anchor="middle" font-family="Liberation Sans" font-weight="bold" font-size="28" fill="#f00">m</text></g>
<g transform="translate(566.5 589.3) scale(0.92 1)"><text x="0" y="0" text-anchor="middle" font-family="Liberation Sans" font-weight="bold" font-size="28" fill="#f00">.</text></g>
<g transform="translate(586.6 589.3) scale(0.92 1)"><text x="0" y="0" text-anchor="middle" font-family="Liberation Sans" font-weight="bold" font-size="28" fill="#f00">c</text></g>
<g transform="translate(604.1 589.3) scale(0.92 1)"><text x="0" y="0" text-anchor="middle" font-family="Liberation Sans" font-weight="bold" font-size="28" fill="#f00">o</text></g>
<g transform="translate(621.1 589.3) scale(0.72 1)"><text x="0" y="0" text-anchor="middle" font-family="Liberation Sans" font-weight="bold" font-size="28" fill="#f00">m</text></g>
</svg><!--/STAMP-->
</body></html>
